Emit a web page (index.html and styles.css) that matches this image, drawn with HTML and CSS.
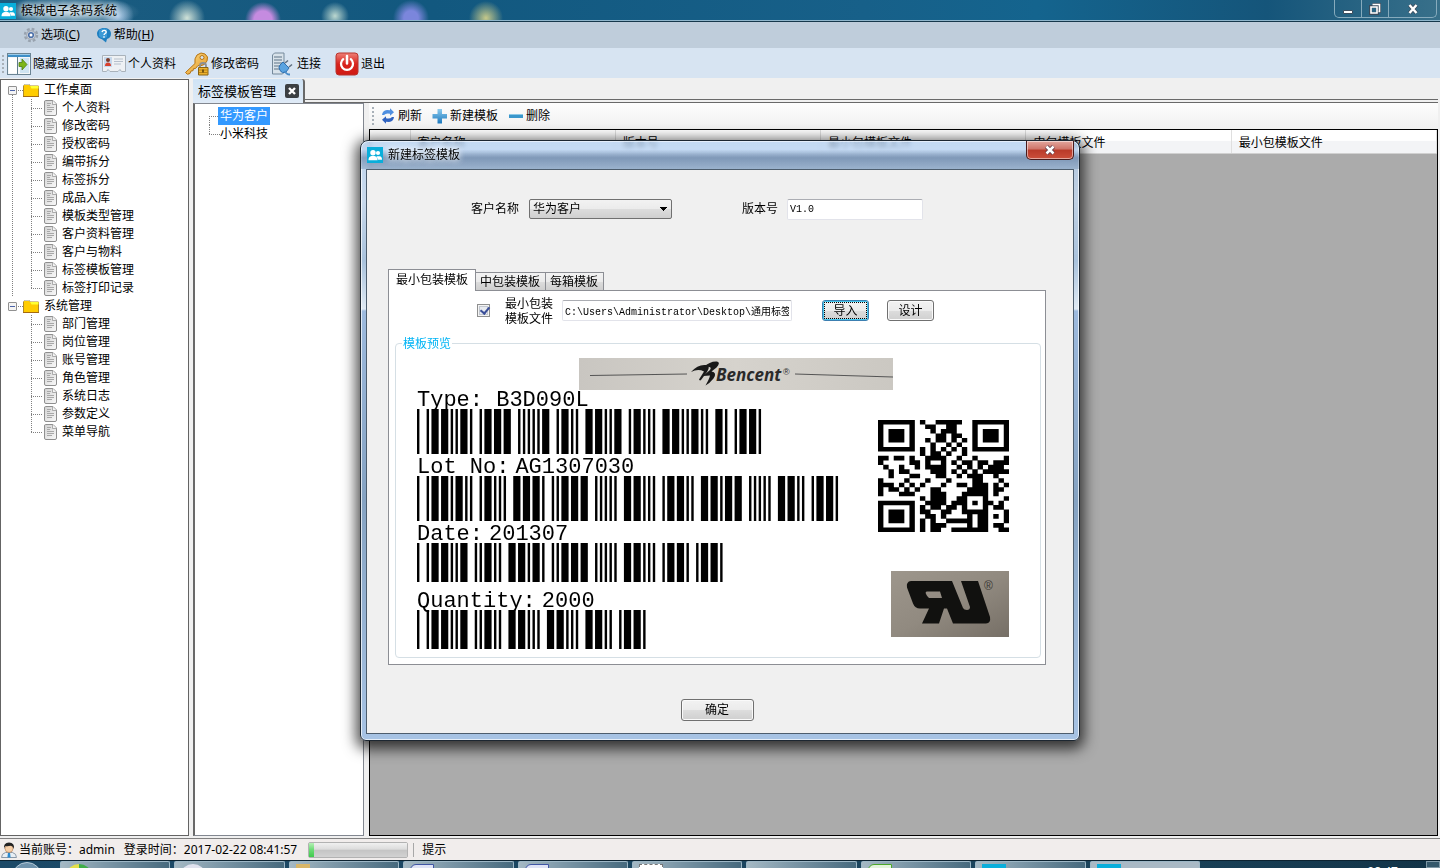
FILE: index.html
```
<!DOCTYPE html>
<html lang="zh-CN">
<head>
    <meta charset="UTF-8">
    <meta name="viewport" content="width=device-width, initial-scale=1.0">
    <title>槟城电子条码系统</title>
    <link rel="stylesheet" href="styles.css">
</head>
<body>
    <svg class="sprites" width="0" height="0">
        <defs>
            <linearGradient id="gPaper" x1="0" y1="0" x2="1" y2="1">
                <stop offset="0" stop-color="#d2d2d2"/><stop offset="1" stop-color="#fafafa"/>
            </linearGradient>
            <linearGradient id="gRed" x1="0" y1="0" x2="0" y2="1">
                <stop offset="0" stop-color="#ee8078"/><stop offset="0.5" stop-color="#d8231d"/><stop offset="1" stop-color="#cf1a14"/>
            </linearGradient>
            <linearGradient id="gBlue" x1="0" y1="0" x2="0" y2="1">
                <stop offset="0" stop-color="#8ccbee"/><stop offset="1" stop-color="#1b78bd"/>
            </linearGradient>
            <linearGradient id="gGold" x1="0" y1="0" x2="1" y2="1">
                <stop offset="0" stop-color="#ffdf8a"/><stop offset="1" stop-color="#e0921d"/>
            </linearGradient>
        </defs>
        <symbol id="users" viewBox="0 0 16 16">
            <rect width="16" height="16" fill="#09aedb"/>
            <circle cx="11" cy="6" r="2.1" fill="#fff"/>
            <path d="M9.500 9.300h3.200q2.300.4 2.300 3.500h-4z" fill="#fff"/>
            <circle cx="6" cy="5.700" r="2.700" fill="#fff"/>
            <path d="M1.500 13.200q0-3.600 3-4.200h3q3 .6 3 4.200z" fill="#fff"/>
        </symbol>
        <symbol id="doc" viewBox="0 0 13 16">
            <path d="M1.500.5h7.500l3.500 3.500v10q0 1.500-1.500 1.500h-9q-1.500 0-1.500-1.500v-12q0-1.500 1-1.500z" fill="url(#gPaper)" stroke="#8f8f8f"/>
            <path d="M8.500.5v4h4" fill="#f4f4f4" stroke="#9a9a9a" stroke-width=".8"/>
            <path d="M3 3.500h4M3 5.500h3M3 7.500h7M3 9.500h7M3 11.500h5" stroke="#a8a8a8"/>
        </symbol>
        <symbol id="folder" viewBox="0 0 16 13">
            <path d="M.5 12.500v-11l1-1h5l1 1.500h8v10.500z" fill="#fc0" stroke="#b08a2a"/>
            <path d="M7 2h8.500v2.500h-7z" fill="#ff3"/>
            <path d="M.5 1.500l1-1h5l1 1.500" fill="none" stroke="#c9c9b8"/>
            <path d="M0 12.500h16" stroke="#a46a10"/>
        </symbol>
    </svg>

    <header class="titlebar">
        <svg class="ico16"><use href="#users"/></svg>
        <span class="title">槟城电子条码系统</span>
        <div class="win-controls">
            <button type="button" aria-label="最小化"><svg width="12" height="12" viewBox="0 0 12 12"><path d="M1.500 7.500h9v3h-9z" fill="#fff" stroke="#3c4c5c"/></svg></button>
            <button type="button" aria-label="还原"><svg width="12" height="12" viewBox="0 0 12 12"><path d="M3.500 1h7.500v7.500h-2M1.500 3.500h7v7h-7z" fill="none" stroke="#3c4c5c" stroke-width="3"/><path d="M3.500 1.500h7v7h-1M2 4h6v6h-6z" fill="none" stroke="#fff" stroke-width="1.600"/></svg></button>
            <button type="button" class="win-close" aria-label="关闭"><svg width="12" height="12" viewBox="0 0 12 12"><path d="M2.500 2l7 8M9.500 2l-7 8" stroke="#3c4c5c" stroke-width="4"/><path d="M2.500 2l7 8M9.500 2l-7 8" stroke="#fff" stroke-width="2.400"/></svg></button>
        </div>
    </header>

    <nav class="menubar">
        <button type="button">
            <svg class="ico16" viewBox="0 0 16 16"><circle cx="8" cy="8" r="6" fill="none" stroke="#98a2ae" stroke-width="2.500" stroke-dasharray="2.700 2"/><circle cx="8" cy="8" r="4.300" fill="#e8ebf0" stroke="#a5adb8" stroke-width="1.500"/><circle cx="8" cy="8" r="2.300" fill="#fff" stroke="#4a6fa8" stroke-width="1.600"/></svg>
            <span>选项(<u>C</u>)</span>
        </button>
        <button type="button">
            <svg class="ico16" viewBox="0 0 16 16"><path d="M8 1c4 0 7 2 7 5.800 0 3-1.500 4.500-4 5.200l-1 3.500-4-3.200c-3-.6-5-2.500-5-5.500 0-3.500 3-5.800 7-5.800z" fill="#1f7fc0"/><path d="M3 3.500q4-3 8-1.500v8q-5 3-8-1z" fill="#3c9ad6"/><path d="M6 5q.4-1.600 2.200-1.600t2 1.500q0 1-1.100 1.600t-1 1.500M8 9.200v1.600" fill="none" stroke="#fff" stroke-width="1.400"/></svg>
            <span>帮助(<u>H</u>)</span>
        </button>
    </nav>

    <div class="toolbar">
        <span class="grip"></span>
        <button type="button">
            <svg width="24" height="22" viewBox="0 0 24 22"><rect x=".5" y=".5" width="23" height="21" fill="#f4f7f9" stroke="#6b8494"/><path d="M1 1h22v3h-22z" fill="#3d8fc8"/><path d="M1 1h22v1h-22z" fill="#9ccbe8"/><path d="M2 5h8v15h-8z" fill="#fff"/><path d="M10.500 4v17" stroke="#5f7c8c"/><path d="M13 5h9v15h-9z" fill="#cfe4f2"/><path d="M12 9.500h3v-3.500l5 5.500-5 5.500v-3.500h-3z" fill="#7cb518" stroke="#4c7d12" stroke-width=".8"/></svg>
            隐藏或显示
        </button>
        <button type="button">
            <svg width="24" height="20" viewBox="0 0 24 20"><path d="M.5 1.500h23v16h-4l-1.500-2-2 2h-8l-2-2-1.500 2h-4z" fill="#eef1f4" stroke="#a9b2bb"/><path d="M2 3h8v10h-8z" fill="#c6d8ec"/><circle cx="6" cy="6" r="2" fill="#7c3a28"/><path d="M3 12q0-3.500 3-3.500t3 3.500z" fill="#d8402c"/><path d="M12 5h9M12 7.500h9M12 10h7" stroke="#b6c0cc"/></svg>
            个人资料
        </button>
        <button type="button">
            <svg width="24" height="24" viewBox="0 0 24 24"><path d="M.5 20.500l9.500-9q-1-5 2-8.500 4-3.500 8-1t2 7-7 5l-2-.5-2.500 3-2 .2-.5 2-2 .3-1 2.500q-3 2-4.500-1z" fill="url(#gGold)" stroke="#b57414"/><circle cx="17" cy="5.500" r="2" fill="#d7e4f2" stroke="#b57414"/><path d="M15 16v-2.500q0-2.500 3-2.500t3 2.500v2.500" fill="none" stroke="#8b8f94" stroke-width="1.800"/><path d="M13.500 15.500h9.500v7.500h-9.500z" fill="#edb22c" stroke="#8a6412"/><path d="M14 18h9M14 20.500h9" stroke="#b98216"/><path d="M18 17.500v3" stroke="#5d430b" stroke-width="1.600"/></svg>
            修改密码
        </button>
        <button type="button" class="connect">
            <svg width="22" height="24" viewBox="0 0 22 24"><path d="M1.500 3l2-2h9.500v19.500l-1.500 1.500h-10z" fill="#d8e2ea" stroke="#74899b"/><path d="M3 5h8M3 8h8M3 11h8M3 14h8M3 17h8" stroke="#8598a8" stroke-width="1.500"/><path d="M9 13l3-3 6 6-3 4q-4 2-6-1.500t0-5.500z" fill="#5aa3e0" stroke="#2f6fae"/><path d="M14 11l3-2.500M18 15l3-2.500" stroke="#5f6f80" stroke-width="1.600"/><path d="M14 19q1 3.500 5 3.500" fill="none" stroke="#4a8cc8" stroke-width="1.800"/></svg>
            连接
        </button>
        <button type="button">
            <svg width="24" height="24" viewBox="0 0 24 24"><rect x="1" y="1" width="22" height="22" rx="3" fill="url(#gRed)" stroke="#b8342e"/><path d="M8.200 7.200a6 6 0 1 0 7.600 0" fill="none" stroke="#fff" stroke-width="2.300" stroke-linecap="round"/><path d="M12 4v7.500" stroke="#fff" stroke-width="2.500" stroke-linecap="round"/></svg>
            退出
        </button>
    </div>

    <main class="workspace">
        <aside class="nav-tree">
            <section class="tree-group">
                <div class="tree-root"><span class="expander"></span><span class="stub"></span><svg class="folder"><use href="#folder"/></svg>工作桌面</div>
                <ul>
                    <li><svg class="doc"><use href="#doc"/></svg>个人资料</li>
                    <li><svg class="doc"><use href="#doc"/></svg>修改密码</li>
                    <li><svg class="doc"><use href="#doc"/></svg>授权密码</li>
                    <li><svg class="doc"><use href="#doc"/></svg>编带拆分</li>
                    <li><svg class="doc"><use href="#doc"/></svg>标签拆分</li>
                    <li><svg class="doc"><use href="#doc"/></svg>成品入库</li>
                    <li><svg class="doc"><use href="#doc"/></svg>模板类型管理</li>
                    <li><svg class="doc"><use href="#doc"/></svg>客户资料管理</li>
                    <li><svg class="doc"><use href="#doc"/></svg>客户与物料</li>
                    <li><svg class="doc"><use href="#doc"/></svg>标签模板管理</li>
                    <li><svg class="doc"><use href="#doc"/></svg>标签打印记录</li>
                </ul>
            </section>
            <section class="tree-group">
                <div class="tree-root"><span class="expander"></span><span class="stub"></span><svg class="folder"><use href="#folder"/></svg>系统管理</div>
                <ul>
                    <li><svg class="doc"><use href="#doc"/></svg>部门管理</li>
                    <li><svg class="doc"><use href="#doc"/></svg>岗位管理</li>
                    <li><svg class="doc"><use href="#doc"/></svg>账号管理</li>
                    <li><svg class="doc"><use href="#doc"/></svg>角色管理</li>
                    <li><svg class="doc"><use href="#doc"/></svg>系统日志</li>
                    <li><svg class="doc"><use href="#doc"/></svg>参数定义</li>
                    <li><svg class="doc"><use href="#doc"/></svg>菜单导航</li>
                </ul>
            </section>
        </aside>

        <div class="documents">
            <div class="doc-tabs">
                <div class="doc-tab">
                    标签模板管理
                    <button type="button" class="tab-close" aria-label="关闭标签"><svg width="14" height="14" viewBox="0 0 14 14"><rect width="14" height="14" rx="2" fill="#3b3f42"/><path d="M4 4l6 6M10 4l-6 6" stroke="#fff" stroke-width="2.400"/></svg></button>
                </div>
                <div class="tab-space"></div>
            </div>
            <div class="doc-body">
                <ul class="client-tree">
                    <li><span class="selected">华为客户</span></li>
                    <li><span>小米科技</span></li>
                </ul>
                <div class="grid-pane">
                    <div class="grid-tools">
                        <span class="grip"></span>
                        <button type="button"><svg width="16" height="16" viewBox="0 0 16 16"><path d="M2 7q.5-4.500 5-5l3 .3v-2l4 4-4 3.500v-2q-4-1-6 1.200z" fill="#4f8fe0"/><path d="M14 9q-.5 4.500-5 5l-3-.3v2l-4-4 4-3.500v2q4 1 6-1.200z" fill="#2f62c0"/></svg>刷新</button>
                        <button type="button"><svg width="16" height="16" viewBox="0 0 16 16"><path d="M5.500 1h4.500v5h5v4.500h-5v5h-4.500v-5h-5v-4.500h5z" fill="url(#gBlue)"/></svg>新建模板</button>
                        <button type="button"><svg width="16" height="16" viewBox="0 0 16 16"><path d="M1 6h14v4h-14z" fill="#3a97cc"/><path d="M1 6h14v1h-14z" fill="#8cc8e6"/></svg>删除</button>
                    </div>
                    <div class="grid">
                        <table>
                            <thead>
                                <tr><th class="row-head"></th><th>客户名称</th><th>版本号</th><th>最小包模板文件</th><th>中包模板文件</th><th>最小包模板文件</th></tr>
                            </thead>
                        </table>
                    </div>
                </div>
            </div>
        </div>
    </main>

    <footer class="statusbar">
        <svg width="16" height="16" viewBox="0 0 16 16"><path d="M.5 15.500q0-4 4-5h7q4 1 4 5z" fill="#e8eef4" stroke="#8a98a8"/><path d="M7 10.500h2l.6 5h-3.200z" fill="#2a8ad0"/><circle cx="8" cy="6.500" r="4" fill="#f6cfa8" stroke="#b07a50" stroke-width=".6"/><path d="M3 7q-.8-6.500 5-6.500t5 6.500q-1-3-3-3.200-4 .8-5.500.2-1.200.8-1.500 3z" fill="#222"/></svg>
        <span class="account">当前账号：admin</span>
        <span>登录时间：2017-02-22 08:41:57</span>
        <progress value="5" max="100" aria-label="进度"></progress>
        <span class="status-sep"></span>
        <span>提示</span>
    </footer>

    <div class="taskbar">
        <span class="orb"></span>
        <div class="tasks">
            <span class="task"><i class="t-green"></i></span>
            <span class="task"><i class="t-pale"></i></span>
            <span class="task"><i class="t-yellow"></i></span>
            <span class="task"><i class="t-word"></i></span>
            <span class="task"><i class="t-word"></i></span>
            <span class="task"><i class="t-note"></i></span>
            <span class="task"></span>
            <span class="task"><i class="t-sheet"></i></span>
            <span class="task"><i class="t-app"></i></span>
            <span class="task active"><i class="t-app"></i></span>
        </div>
        <span class="clock">08:47</span>
        <span class="show-desktop"></span>
    </div>

    <div class="dialog-layer">
        <form class="dialog" role="dialog" aria-labelledby="dialogTitle">
            <div class="dialog-title">
                <svg class="ico16"><use href="#users"/></svg>
                <span id="dialogTitle" class="title">新建标签模板</span>
                <button type="button" class="dialog-close" aria-label="关闭"><svg width="12" height="12" viewBox="0 0 12 12"><path d="M2.500 2.500l7 7M9.500 2.500l-7 7" stroke="#5c3a4a" stroke-width="4.200"/><path d="M2.500 2.500l7 7M9.500 2.500l-7 7" stroke="#fff" stroke-width="2.500"/></svg></button>
            </div>
            <div class="dialog-body">
                <div class="form-row">
                    <label for="customer">客户名称</label>
                    <select id="customer"><option>华为客户</option><option>小米科技</option></select>
                    <label for="version" class="version-label">版本号</label>
                    <input type="text" id="version" class="textbox version" value="V1.0">
                </div>
                <div class="tabs" role="tablist">
                    <button type="button" role="tab" class="tab active">最小包装模板</button>
                    <button type="button" role="tab" class="tab">中包装模板</button>
                    <button type="button" role="tab" class="tab">每箱模板</button>
                </div>
                <div class="tab-panel">
                    <div class="file-row">
                        <input type="checkbox" id="useMin" checked>
                        <label for="useMin">最小包装<br>模板文件</label>
                        <input type="text" class="textbox path" aria-label="模板文件路径" value="C:\Users\Administrator\Desktop\通用标签">
                        <button type="button" class="btn focused">导入</button>
                        <button type="button" class="btn">设计</button>
                    </div>
                    <fieldset>
                        <legend>模板预览</legend>
                        <div class="label-sheet">
                            <svg class="banner" viewBox="0 0 314 32">
                                <defs><linearGradient id="gBanner"><stop offset="0" stop-color="#c9c6c1"/><stop offset=".5" stop-color="#d6d3cd"/><stop offset="1" stop-color="#cbc8c2"/></linearGradient></defs>
                                <rect width="314" height="32" fill="url(#gBanner)"/>
                                <path d="M11 17.500l97-1.500" stroke="#555" stroke-width="1.200"/>
                                <path d="M216 16l98 3" stroke="#555" stroke-width="1.200"/>
                                <path d="M112 14q7-8 15-7 5 1 1 7l-6 8q-1 1-2-.5l5-8q-6-3-13 .5z" fill="#191919"/>
                                <path d="M125 9q6-6 13-5.500 4 1-.5 6l-5 4q6 1 2 7-4 5-8 7 4-7 4.500-10l-7 .5 7-6q3-4-6-3z" fill="#191919"/>
                                <text x="137" y="23" class="brand">Bencent</text>
                                <text x="204" y="17" class="brand-r">®</text>
                            </svg>
                            <div class="codes">
                                <div class="code"><p><span>Type: </span><span>B3D090L</span></p><svg class="bars" data-code="B3D090L"></svg></div>
                                <div class="code"><p><span>Lot No:</span><span>AG1307030</span></p><svg class="bars" data-code="AG1307030"></svg></div>
                                <div class="code short"><p><span>Date:</span><span>201307</span></p><svg class="bars" data-code="201307"></svg></div>
                                <div class="code short last"><p><span>Quantity:</span><span>2000</span></p><svg class="bars" data-code="2000"></svg></div>
                            </div>
                            <div class="marks">
                                <svg id="qr" viewBox="0 0 25 25" preserveAspectRatio="none"></svg>
                                <svg class="ul-mark" viewBox="0 0 118 66">
                                    <defs><linearGradient id="gMark" x1="0" y1="0" x2="1" y2="1"><stop offset="0" stop-color="#9d968c"/><stop offset=".5" stop-color="#918a80"/><stop offset="1" stop-color="#766f66"/></linearGradient></defs>
                                    <rect width="118" height="66" fill="url(#gMark)"/>
                                    <path fill-rule="evenodd" d="M20 10h41l11 27q1 2 4 2t3-3l-9-26h17l12 36q1 6-4 6.500h-33l-6-15h-3l-5 15h-17l7-15h-9q-5 0-7-5l-6-16q-1-6 4-6.500zM36 20.500q-2 0-1 2.500t3 4h13l-2-6.500z" fill="#11110f"/>
                                    <text x="93" y="19" class="mark-r">®</text>
                                </svg>
                            </div>
                        </div>
                    </fieldset>
                </div>
                <button type="submit" class="btn ok">确定</button>
            </div>
        </form>
    </div>

    <script src="script.js"></script>
</body>
</html>
```
FILE: styles.css
```
* {
    box-sizing: border-box;
}
body {
    margin: 0;
    height: 100vh;
    display: flex;
    flex-direction: column;
    overflow: hidden;
    font-family: "Noto Sans", "Noto Sans CJK SC", sans-serif;
    font-size: 12px;
    line-height: 18px;
    color: #000;
    background: #f0f0f0;
}
button, input, select {
    font: inherit;
    color: inherit;
    margin: 0;
}
button {
    padding: 0;
    border: 0;
    background: none;
    white-space: nowrap;
}
svg {
    display: block;
    flex: none;
}
ul, p {
    margin: 0;
    padding: 0;
    list-style: none;
}
.sprites {
    position: absolute;
}
.ico16 {
    width: 16px;
    height: 16px;
}

/* main window caption */
.titlebar {
    flex: none;
    display: flex;
    align-items: center;
    gap: 5px;
    height: 22px;
    border-bottom: 1px solid #16384c;
    box-shadow: inset 0 -1px #8fb6cc;
    background:
        radial-gradient(ellipse 70px 16px at 70px 12px, rgba(205, 222, 232, .85), transparent),
        radial-gradient(circle 16px at 118px 16px, #a9c9ea, transparent),
        radial-gradient(circle 18px at 187px 18px, #d0e2d8, transparent),
        radial-gradient(circle 18px at 263px 20px, #c58be0 50%, transparent),
        radial-gradient(circle 14px at 335px 16px, #bcd8d0, transparent),
        radial-gradient(circle 18px at 411px 18px, #7b86dc 40%, transparent),
        radial-gradient(circle 17px at 486px 18px, #c6c98a, transparent),
        linear-gradient(90deg, #1c5c80, #12587f 30%, #176089 60%, #14648e 72%, #15557a 88%, #38708a);
}
.title {
    text-shadow: 0 0 6px #fff, 0 0 6px #fff;
}
.win-controls {
    align-self: flex-start;
    display: flex;
    height: 18px;
    margin: 0 3px 0 auto;
    border: 1px solid #86abbd;
    border-top: 0;
    border-radius: 0 0 5px 5px;
}
.win-controls button {
    display: flex;
    align-items: center;
    justify-content: center;
    width: 27px;
    border-right: 1px solid #86abbd;
}
.win-controls .win-close {
    width: 47px;
    border-right: 0;
}

.menubar {
    flex: none;
    display: flex;
    align-items: center;
    gap: 16px;
    height: 26px;
    padding-left: 23px;
    background: #bfcddb;
}
.menubar button {
    display: flex;
    align-items: center;
    gap: 2px;
}

.toolbar {
    flex: none;
    display: flex;
    align-items: center;
    gap: 9px;
    height: 30px;
    padding: 1px 0 0 2px;
    background: #d7e4f2;
}
.toolbar button, .grid-tools button {
    display: flex;
    align-items: center;
    gap: 2px;
}
.toolbar .connect {
    gap: 4px;
    margin: 0 5px 0 3px;
}
.toolbar .grip {
    margin-right: -6px;
}
.grip {
    width: 2px;
    height: 18px;
    background: repeating-linear-gradient(#a8b0b8 0 2px, transparent 2px 4px);
}

/* tree and documents */
.workspace {
    flex: 1;
    min-height: 0;
    display: flex;
    gap: 4px;
    padding: 1px 2px 2px 0;
}
.nav-tree {
    flex: none;
    width: 189px;
    padding: 1px 0 0 7px;
    border: 1px solid #646464;
    background: #fff;
}
.tree-group {
    background: repeating-linear-gradient(#808080 0 1px, transparent 1px 2px) 4px 14px / 1px 100% no-repeat;
}
.tree-group:last-child {
    background: none;
}
.tree-root {
    display: flex;
    align-items: center;
    height: 18px;
}
.expander {
    width: 9px;
    height: 9px;
    border: 1px solid #919191;
    border-radius: 1px;
    background: linear-gradient(#4b63a7, #4b63a7) center / 5px 1px no-repeat, #f4f4f4;
}
.stub {
    width: 6px;
    height: 1px;
    background: repeating-linear-gradient(90deg, transparent 0 1px, #808080 1px 2px);
}
.folder {
    width: 16px;
    height: 13px;
    margin-right: 5px;
}
.nav-tree ul {
    margin-left: 23px;
}
.nav-tree li {
    display: flex;
    align-items: center;
    height: 18px;
    padding-left: 13px;
}
.nav-tree li, .client-tree li {
    background:
        repeating-linear-gradient(#808080 0 1px, transparent 1px 2px) 0 0 / 1px 100% no-repeat,
        repeating-linear-gradient(90deg, #808080 0 1px, transparent 1px 2px) 0 9px / 11px 1px no-repeat;
}
.nav-tree li:last-child, .client-tree li:last-child {
    background-size: 1px 9px, 11px 1px;
}
.doc {
    width: 13px;
    height: 16px;
    margin-right: 5px;
}
.documents {
    flex: 1;
    min-width: 0;
    display: flex;
    flex-direction: column;
}
.doc-tabs {
    display: flex;
    height: 24px;
}
.doc-tab {
    display: flex;
    align-items: center;
    gap: 9px;
    padding: 0 4px 0 5px;
    font-size: 13px;
    border-right: 2px solid #696969;
    border-radius: 0 3px 0 0;
    background: linear-gradient(#cfe3f5, #dfeaf6);
}
.tab-space {
    flex: 1;
    border-bottom: 4px double #696969;
}
.doc-body {
    flex: 1;
    min-height: 0;
    display: flex;
    gap: 5px;
}
.client-tree {
    flex: none;
    width: 171px;
    padding: 3px 0 0 14px;
    border: 1px solid #828790;
    border-left: 2px solid #696969;
    background: #fff;
}
.client-tree li {
    height: 18px;
    padding-left: 9px;
}
.client-tree li:first-child {
    background-position: 0 9px, 0 9px;
}
.client-tree span {
    display: inline-block;
    padding: 0 2px;
}
.client-tree .selected {
    color: #fff;
    background: #3399ff;
}
.grid-pane {
    flex: 1;
    min-width: 0;
    display: flex;
    flex-direction: column;
}
.grid-tools {
    display: flex;
    align-items: center;
    gap: 10px;
    height: 26px;
    padding-left: 3px;
    background: linear-gradient(#fdfdfd, #f0f0f0);
}
.grid-tools .grip {
    margin-right: -4px;
}
.grid {
    flex: 1;
    border: 1px solid #000;
    background: #ababab;
}
.grid table {
    width: 100%;
    table-layout: fixed;
    border-collapse: collapse;
}
.grid th {
    height: 23px;
    padding: 4px 0 0 7px;
    font-weight: normal;
    text-align: left;
    border-right: 1px solid #dfdfdf;
    border-bottom: 1px solid #d0d0d0;
    background: linear-gradient(#fff 45%, #f3f4f6 50%);
}
.grid .row-head {
    width: 40px;
}

.statusbar {
    flex: none;
    display: flex;
    align-items: center;
    height: 22px;
    padding-left: 1px;
    border-top: 1px solid #808080;
    background: #f1edec;
}
.statusbar .account {
    margin: 0 9px 0 2px;
}
progress {
    appearance: none;
    width: 100px;
    height: 16px;
    margin: 0 5px 0 11px;
    border: 1px solid #b2b2b2;
    border-radius: 2px;
}
progress::-webkit-progress-bar {
    background: linear-gradient(#f0f0f0, #dcdcdc 45%, #c4c4c4 50%, #d2d2d2);
}
progress::-webkit-progress-value {
    background: linear-gradient(#b6f0b6, #6fdc78 45%, #3fca4c);
}
.status-sep {
    width: 1px;
    height: 14px;
    margin-right: 8px;
    background: #a8a8a8;
}

.taskbar {
    flex: none;
    display: flex;
    height: 8px;
    overflow: hidden;
    border-top: 1px solid #0c2230;
    background: linear-gradient(90deg, #1c4a68, #1a4259 80%, #123347);
}
.orb {
    width: 30px;
    height: 30px;
    margin: 1px 18px 0 12px;
    border: 1px solid #b5cad8;
    border-radius: 50%;
    background: #6f93ac;
}
.tasks {
    flex: 0 1 1140px;
    display: flex;
    gap: 4px;
}
.task {
    flex: 1;
    padding: 2px 6px 0;
    border: 1px solid #9db7c6;
    border-bottom: 0;
    border-radius: 2px 2px 0 0;
    background: linear-gradient(100deg, #a5b9c4, #7d98a8 40%, #46697d);
}
.task.active {
    background: #a9b9c5;
}
.task i {
    display: block;
    width: 24px;
    height: 20px;
}
.t-green {
    border-radius: 50%;
    background: linear-gradient(90deg, #e5e04a 50%, #3fae49 50%);
}
.t-pale {
    border-radius: 50%;
    background: #e0e2ee;
}
.t-yellow {
    background: linear-gradient(90deg, #d8b668 60%, transparent 60%);
}
.t-word {
    border: 1px solid #3f55a4;
    border-radius: 6px 0 0 0;
    background: #dfe3f6;
}
.t-note {
    border: 1px dashed #777;
    background: #fff;
}
.t-sheet {
    border: 1px solid #4ca82a;
    border-radius: 6px 0 0 0;
    background: #e4f4dc;
}
.t-app {
    background: #09aedb;
}
.clock {
    margin: 2px 28px 0 auto;
    color: #fff;
}
.show-desktop {
    width: 14px;
    border: 1px solid #7f98a6;
    background: #35586b;
}

/* new template dialog */
.dialog-layer {
    position: fixed;
    inset: 0;
    display: flex;
    align-items: center;
    justify-content: center;
    padding-top: 12px;
}
.dialog {
    width: 50%;
    min-width: 720px;
    padding: 0 5px 6px;
    border: 1px solid #1d2731;
    border-radius: 8px 8px 6px 6px;
    background: linear-gradient(rgba(178, 208, 242, .7), rgba(196, 216, 238, .85) 60px, #a9c2dc 120px, #e0eaf4 168px, #9dbade 170px, #86a3c2 60%, #a7c3e4);
    backdrop-filter: blur(2px);
    box-shadow: inset 0 0 0 1px rgba(255, 255, 255, .7), 0 4px 14px 4px rgba(0, 0, 0, .7);
}
.dialog-title {
    display: flex;
    align-items: center;
    gap: 5px;
    height: 28px;
    margin: 0 -5px;
    padding: 0 5px 0 6px;
    border-radius: 7px 7px 0 0;
    background: linear-gradient(rgba(190, 215, 245, .2) 30%, rgba(75, 105, 145, .5) 60%, rgba(110, 140, 175, .4));
}
.dialog-close {
    align-self: flex-start;
    display: flex;
    align-items: center;
    justify-content: center;
    width: 48px;
    height: 19px;
    margin-left: auto;
    border: 1px solid #4a1a1a;
    border-top: 0;
    border-radius: 0 0 5px 5px;
    box-shadow: inset 0 0 0 1px rgba(255, 255, 255, .5);
    background: linear-gradient(#e3a79e, #cf7468 45%, #b93a29 50%, #cc4f3b);
}
.dialog-body {
    padding: 29px 27px 12px 21px;
    border: 1px solid #4d5d6d;
    background: #f0f0f0;
}
.form-row {
    display: flex;
    align-items: center;
    height: 21px;
    margin: 0 0 49px 83px;
}
select {
    appearance: none;
    width: 143px;
    height: 20px;
    margin-left: 10px;
    padding: 0 3px;
    border: 1px solid #707070;
    border-radius: 2px;
    background:
        linear-gradient(45deg, transparent 50%, #000 50%) right 8px center / 4px 4px no-repeat,
        linear-gradient(-45deg, transparent 50%, #000 50%) right 4px center / 4px 4px no-repeat,
        linear-gradient(#f2f2f2, #ebebeb 50%, #dddddd 50%, #cfcfcf);
}
.version-label {
    margin: 0 9px 0 70px;
}
.textbox {
    height: 21px;
    padding: 0 2px;
    border: 1px solid #e2e3ea;
    border-top-color: #abadb3;
    border-radius: 2px;
    background: #fff;
    font-family: "Liberation Mono", "Noto Sans CJK SC", monospace;
    font-size: 10px;
}
.version {
    width: 136px;
}
.tabs {
    display: flex;
    align-items: flex-end;
    height: 22px;
    margin-bottom: -1px;
}
.tab {
    height: 19px;
    padding: 0 5px 0 4px;
    border: 1px solid #8c8e94;
    border-left: 0;
    background: linear-gradient(#f2f2f2, #ebebeb 50%, #dddddd 50%, #cfcfcf);
}
.tab.active {
    height: 22px;
    padding: 0 7px;
    border: 1px solid #8c8e94;
    border-bottom: 0;
    background: #fff;
}
.tab-panel {
    padding: 5px 4px 6px 6px;
    border: 1px solid #8c8e94;
    background: #fff;
}
.file-row {
    display: flex;
    align-items: center;
    height: 30px;
    padding-left: 82px;
    line-height: 15px;
}
input[type="checkbox"] {
    appearance: none;
    width: 13px;
    height: 13px;
    margin-right: 15px;
    border: 1px solid #8e8f8f;
    box-shadow: inset 0 0 0 1px #f4f4f4, inset 0 0 0 2px #c3c8d0;
    background: #e8ebf0;
}
input[type="checkbox"]:checked::before {
    content: "";
    display: block;
    width: 4px;
    height: 7px;
    margin: 0 0 0 4px;
    border: solid #3b4f99;
    border-width: 0 2px 2px 0;
    transform: rotate(40deg);
}
.path {
    width: 230px;
    margin: 0 30px 0 9px;
}
.btn {
    width: 47px;
    height: 21px;
    border: 1px solid #707070;
    border-radius: 3px;
    line-height: 18px;
    box-shadow: inset 0 0 0 1px #fafafa;
    background: linear-gradient(#f2f2f2, #ebebeb 50%, #dddddd 50%, #cfcfcf);
}
.btn.focused {
    margin-right: 18px;
    border-color: #3c7fb1;
    box-shadow: inset 0 0 0 1px #48c8ee;
    outline: 1px dotted #000;
    outline-offset: -3px;
}
.btn.ok {
    display: block;
    width: 73px;
    height: 22px;
    margin: 34px auto 0;
}
fieldset {
    margin: 9px 0 0;
    padding: 5px 31px 8px 21px;
    border: 1px solid #d5dfe5;
    border-radius: 4px;
}
legend {
    margin-left: -15px;
    padding: 0 1px;
    color: #00b4f5;
}
.label-sheet {
    display: grid;
    grid-template-columns: 1fr auto;
}
.banner {
    grid-column: 1 / 3;
    width: 314px;
    height: 32px;
    margin-left: 162px;
}
.brand {
    font: italic bold 17px "Open Sans", sans-serif;
    fill: #2a2a2a;
}
.brand-r {
    font: 9px "Liberation Sans", sans-serif;
    fill: #2a2a2a;
}
.code {
    margin-top: -3px;
}
.code + .code {
    margin-top: 0;
}
.code p {
    padding-top: 3px;
    margin-bottom: -3px;
    font: 22px/22px "Liberation Mono", monospace;
    white-space: pre;
}
.code + .code span + span {
    margin-left: 6px;
}
.code + .last {
    margin-top: 6px;
}
.bars {
    height: 45px;
}
.short .bars {
    height: 39px;
}
.marks {
    display: flex;
    flex-direction: column;
    align-items: flex-end;
    gap: 39px;
    padding-top: 30px;
}
#qr {
    width: 131px;
    height: 112px;
}
.ul-mark {
    width: 118px;
    height: 66px;
}
.mark-r {
    font: 12px "Liberation Sans", sans-serif;
    fill: #3a3733;
}
```
FILE: script.js
```
// Code 39: nine elements per character, bar first, w = wide
const code39 = {
    "0": "nnnwwnwnn", "1": "wnnwnnnnw", "2": "nnwwnnnnw", "3": "wnwwnnnnn",
    "7": "nnnwnnwnw", "9": "nnwwnnwnn", "A": "wnnnnwnnw", "B": "nnwnnwnnw",
    "D": "nnnnwwnnw", "G": "nnnnnwwnw", "L": "nnwnnnnww", "*": "nwnnwnwnn"
};
const ns = "http://www.w3.org/2000/svg";
const unit = 2.406;

document.querySelectorAll(".bars").forEach(svg => {
    let x = 0;
    let d = "";
    for (const ch of "*" + svg.dataset.code + "*") {
        code39[ch].split("").forEach((el, i) => {
            const w = (el === "w" ? 3 : 1) * unit;
            if (i % 2 === 0) {
                d += `M${x.toFixed(2)} 0h${w.toFixed(2)}v45h-${w.toFixed(2)}z`;
            }
            x += w;
        });
        x += unit;
    }
    const path = document.createElementNS(ns, "path");
    path.setAttribute("d", d);
    svg.setAttribute("width", Math.ceil(x));
    svg.appendChild(path);
});

const qrRows = [
    "#######.#..#####..#######",
    "#.....#..##..##...#.....#",
    "#.###.#...#.###...#.###.#",
    "#.###.#....##.##..#.###.#",
    "#.###.#..#.##.#.#.#.###.#",
    "#.....#...#..#.#..#.....#",
    "#######.#.#.#.#.#.#######",
    "........#.##.#..#........",
    "##.##.#..####..#..#.....#",
    "#.....##.#..#.#.##.##.###",
    ".#..#..#.####..#.#.#.###.",
    "..#.##....###.#.#.#.#####",
    "..#...##...##..#.###..#..",
    "#....#...#...#....##...#.",
    "###.#.#.#...#..##.###.#.#",
    "#.##.#.#..##.....####.##.",
    "#...###...###...#####.#..",
    "........#.###..##...#...#",
    "#######..####.###.#.##.#.",
    "#.....#.#.##.##.#...#.##.",
    "#.###.#.##..##..#####...#",
    "#.###.#..##.#....#.##.#.#",
    "#.###.#.#.#..#####.##...#",
    "#.....#.#.###....#.##.##.",
    "#######.#.##..#######..##"
];
const qr = document.getElementById("qr");
let cells = "";
qrRows.forEach((row, y) => {
    [...row].forEach((c, x) => {
        if (c === "#") {
            cells += `M${x} ${y}h1.03v1.03h-1.03z`;
        }
    });
});
const qrPath = document.createElementNS(ns, "path");
qrPath.setAttribute("d", cells);
qr.appendChild(qrPath);
```
